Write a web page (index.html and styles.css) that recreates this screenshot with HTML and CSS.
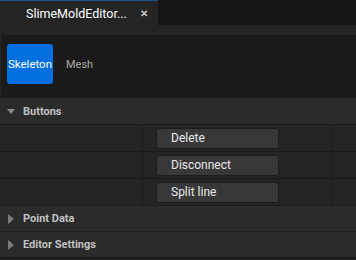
FILE: index.html
```html
<!DOCTYPE html>
<html lang="en">
<head>
  <title>SlimeMoldEditor</title>
  <link rel="stylesheet" href="styles.css">
</head>
<body>
  <div class="tabbar">
    <div class="tab">
      <span class="tab-title">SlimeMoldEditor...</span>
      <span class="tab-close">&#x2715;</span>
    </div>
  </div>
  <div class="tabstrip"></div>
  <div class="modes">
    <div class="mode active">Skeleton</div>
    <div class="mode">Mesh</div>
  </div>
  <div class="details">
    <div class="section first">
      <span class="arrow down"></span>Buttons
    </div>
    <div class="row">
      <div class="row-name"></div>
      <div class="row-value"><button class="btn">Delete</button></div>
      <div class="row-extra"></div>
    </div>
    <div class="row">
      <div class="row-name"></div>
      <div class="row-value"><button class="btn">Disconnect</button></div>
      <div class="row-extra"></div>
    </div>
    <div class="row">
      <div class="row-name"></div>
      <div class="row-value"><button class="btn">Split line</button></div>
      <div class="row-extra"></div>
    </div>
    <div class="section">
      <span class="arrow right"></span>Point Data
    </div>
    <div class="section">
      <span class="arrow right"></span>Editor Settings
    </div>
  </div>
</body>
</html>
```

FILE: styles.css
```css
body {
  margin: 0;
  background-color: #1a1a1a;
  font-family: Roboto, "Liberation Sans", sans-serif;
  width: 356px;
  height: 260px;
  overflow: hidden;
}
.tabbar {
  height: 25px;
  background-color: #151515;
  display: flex;
}
.tab {
  width: 158px;
  background-color: #242424;
  border-top: 1px solid #1c4f8c;
  box-sizing: border-box;
  display: flex;
  align-items: center;
  padding-left: 26px;
  color: #ffffff;
  font-size: 12.5px;
}
.tab-title {
  width: 114px;
}
.tab-close {
  font-size: 10px;
  color: #c8c8c8;
  font-weight: bold;
}
.tabstrip {
  height: 10px;
  background-color: #242424;
}
.modes {
  height: 62px;
  box-sizing: border-box;
  padding: 9px 0 0 7px;
  display: flex;
  align-items: flex-start;
  border-left: 1px solid #262626;
}
.mode {
  height: 40px;
  display: flex;
  align-items: center;
  font-size: 11px;
  color: #a8a8a8;
  padding: 0 13px;
}
.mode.active {
  width: 46px;
  box-sizing: border-box;
  padding: 0;
  justify-content: center;
  background-color: #0070e0;
  color: #ffffff;
  font-size: 11.5px;
  border-radius: 3px;
  margin-left: -1px;
}
.section {
  height: 25px;
  background-color: #2b2b2b;
  border-top: 1px solid #1e1e1e;
  display: flex;
  align-items: center;
  font-size: 11px;
  font-weight: bold;
  color: #c0c0c0;
}
.section.first {
  height: 26px;
}
.arrow {
  width: 0;
  height: 0;
}
.arrow.down {
  margin: 0 8px 0 7px;
  border-left: 4px solid transparent;
  border-right: 4px solid transparent;
  border-top: 5px solid #8a8a8a;
}
.arrow.right {
  margin: 0 9px 0 8px;
  border-top: 5px solid transparent;
  border-bottom: 5px solid transparent;
  border-left: 6px solid #7a7a7a;
}
.row {
  height: 26px;
  display: flex;
  background-color: #242424;
  border-top: 1px solid #1a1a1a;
}
.row-name {
  width: 142px;
  border-right: 1px solid #1a1a1a;
}
.row-value {
  width: 190px;
  display: flex;
  align-items: center;
  padding-left: 13px;
  box-sizing: border-box;
  border-right: 1px solid #1a1a1a;
}
.btn {
  width: 123px;
  height: 21px;
  background-color: #383838;
  border: 1px solid #1c1c1c;
  border-radius: 3px;
  color: #e8e8e8;
  font-family: Roboto, "Liberation Sans", sans-serif;
  font-size: 12px;
  text-align: left;
  padding: 0 0 0 14px;
}
.row-extra {
  flex: 1;
}
```
